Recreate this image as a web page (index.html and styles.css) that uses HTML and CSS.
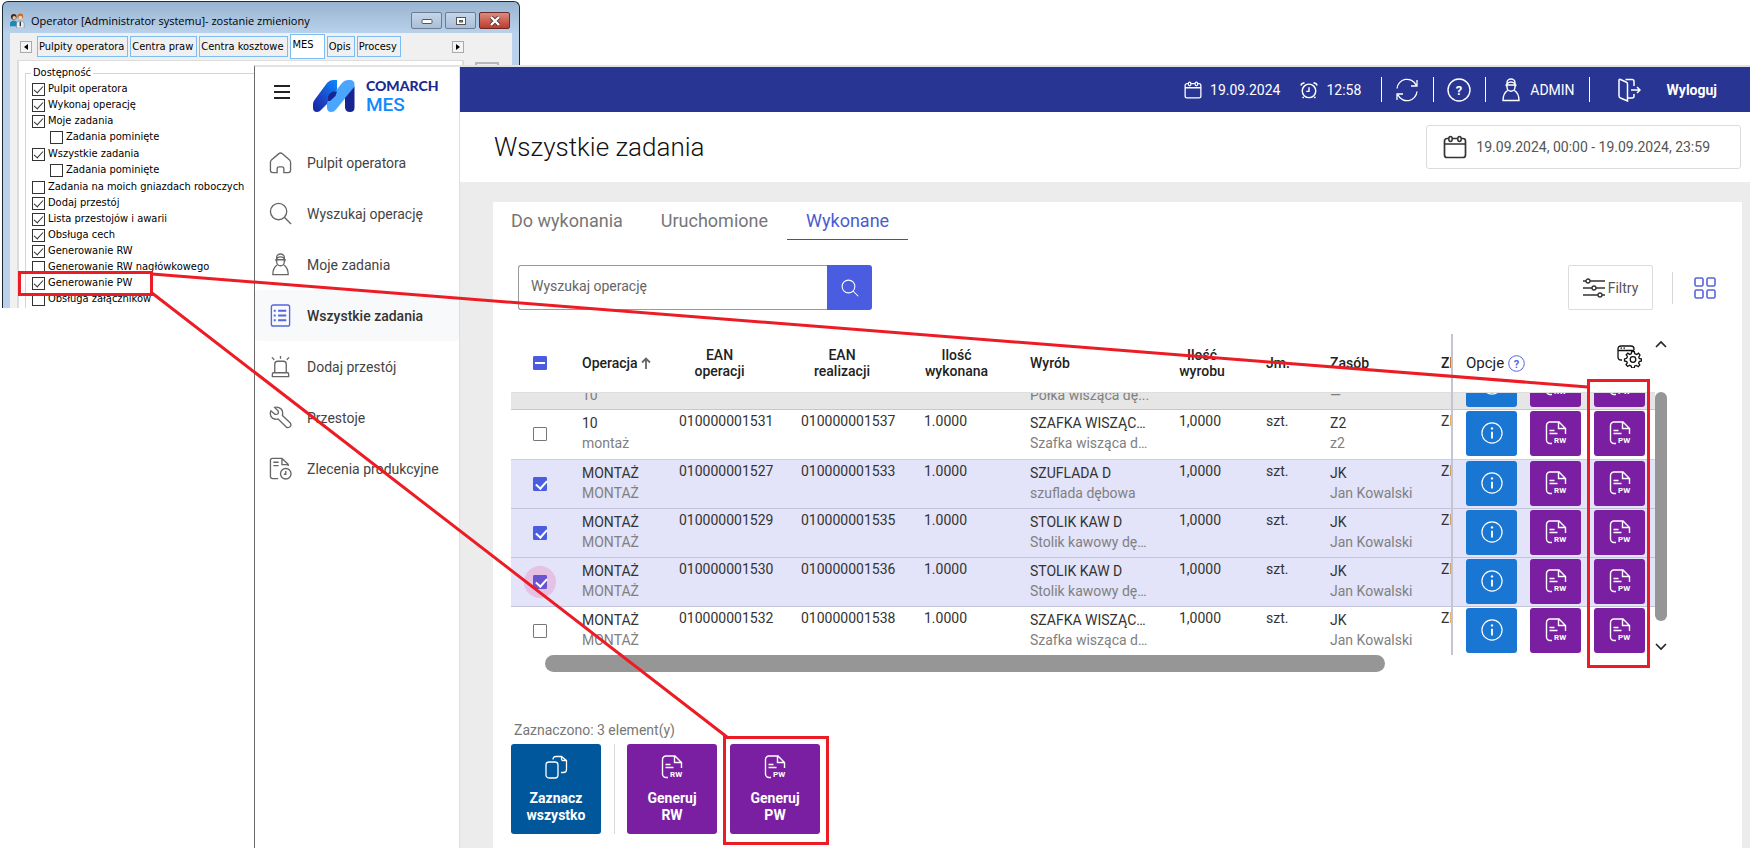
FILE: index.html
```html
<!DOCTYPE html>
<html lang="pl">
<head>
<meta charset="utf-8">
<title>Comarch MES – Wszystkie zadania</title>
<link rel="stylesheet" href="styles.css">
</head>
<body>
<svg class="defs" aria-hidden="true">
  <symbol id="i-doc" viewBox="0 0 22 24"><path d="M7 22.500H5A3.500 3.500 0 0 1 1.500 19V4.500A3.500 3.500 0 0 1 5 1H14L20.500 7.500V13M13.500 1.500V7.500H20M4.500 9.500H9.500M4.500 12.500H12.500" fill="none" stroke="currentColor" stroke-width="1.400"/></symbol>
  <symbol id="i-info" viewBox="0 0 24 24"><circle cx="12" cy="12" r="11" fill="none" stroke="currentColor" stroke-width="1.300"/><path d="M12 10.500V18" stroke="currentColor" stroke-width="2"/><circle cx="12" cy="7" r="1.300" fill="currentColor"/></symbol>
  <symbol id="i-user" viewBox="0 0 18 24"><path d="M4.500 8.500A4.500 4.500 0 0 1 13.500 8.500M3.500 7H14.500M5 7.500V9A4 4.300 0 0 0 13 9V7.500M5.500 12.500C2.500 14.500 1 17.500 1 22.500H17C17 17.500 15.500 14.500 12.500 12.500M5 6V4.500A4 3.500 0 0 1 13 4.500V6" fill="none" stroke="currentColor" stroke-width="1.400"/></symbol>
  <symbol id="i-cal" viewBox="0 0 24 24"><path d="M6 3.500H4A2.500 2.500 0 0 0 1.500 6V20A2.500 2.500 0 0 0 4 22.500H20A2.500 2.500 0 0 0 22.500 20V6A2.500 2.500 0 0 0 20 3.500H18M9 3.500H15M1.500 9H22.500" fill="none" stroke="currentColor" stroke-width="1.700"/><ellipse cx="7.500" cy="4" rx="1.700" ry="2.500" fill="none" stroke="currentColor" stroke-width="1.500"/><ellipse cx="16.500" cy="4" rx="1.700" ry="2.500" fill="none" stroke="currentColor" stroke-width="1.500"/></symbol>
  <symbol id="i-search" viewBox="0 0 24 24"><circle cx="10" cy="10" r="8.500" fill="none" stroke="currentColor" stroke-width="1.400"/><path d="M16 16L23 23" stroke="currentColor" stroke-width="1.400"/></symbol>
</svg>

<section class="win">
  <header class="win-title">
    <svg class="win-icon" viewBox="0 0 16 16"><circle cx="4" cy="4" r="3" fill="#3b2a20"/><circle cx="4.500" cy="5" r="1.800" fill="#f3c79a"/><path d="M0 14V10Q4 6 8 10V14Z" fill="#1b8ab5"/><circle cx="11" cy="3.500" r="3" fill="#d2691e"/><circle cx="11" cy="5" r="2" fill="#f7d3a8"/><path d="M7 16V10.500Q11 6 15 10.500V16Z" fill="#eceff2" stroke="#667" stroke-width=".5"/><path d="M11 9V14" stroke="#333" stroke-width="1.500"/></svg>
    <span class="win-name">Operator [Administrator systemu]- zostanie zmieniony</span>
    <button class="win-btn" aria-label="Minimalizuj"><svg width="12" height="10"><rect x="1" y="3.500" width="10" height="4" rx="1" fill="#fff" stroke="#555"/></svg></button>
    <button class="win-btn" aria-label="Maksymalizuj"><svg width="12" height="10"><rect x="1.500" y="1.500" width="9" height="7" fill="#fff" stroke="#555"/><rect x="4.500" y="4.500" width="3" height="1.500" fill="#8ac" stroke="#555"/></svg></button>
    <button class="win-btn win-close" aria-label="Zamknij"><svg width="12" height="10"><path d="M2 1L10 9M10 1L2 9" stroke="#533" stroke-width="4"/><path d="M2 1L10 9M10 1L2 9" stroke="#fff" stroke-width="2.400"/></svg></button>
  </header>
  <div class="win-body">
    <nav class="win-tabs">
      <button class="arrow" aria-label="W lewo"><svg width="4" height="6"><path d="M4 0V6L0 3Z"/></svg></button>
      <button class="wtab">Pulpity operatora</button>
      <button class="wtab">Centra praw</button>
      <button class="wtab">Centra kosztowe</button>
      <button class="wtab wtab-on">MES</button>
      <button class="wtab">Opis</button>
      <button class="wtab">Procesy</button>
      <button class="arrow arrow-right" aria-label="W prawo"><svg width="4" height="6"><path d="M0 0V6L4 3Z"/></svg></button>
    </nav>
    <div class="win-cols">
      <div class="win-page">
        <fieldset class="group">
          <legend>Dostępność</legend>
          <label class="opt"><input type="checkbox" checked>Pulpit operatora</label>
          <label class="opt"><input type="checkbox" checked>Wykonaj operację</label>
          <label class="opt"><input type="checkbox" checked>Moje zadania</label>
          <label class="opt sub"><input type="checkbox">Zadania pominięte</label>
          <label class="opt"><input type="checkbox" checked>Wszystkie zadania</label>
          <label class="opt sub"><input type="checkbox">Zadania pominięte</label>
          <label class="opt"><input type="checkbox">Zadania na moich gniazdach roboczych</label>
          <label class="opt"><input type="checkbox" checked>Dodaj przestój</label>
          <label class="opt"><input type="checkbox" checked>Lista przestojów i awarii</label>
          <label class="opt"><input type="checkbox" checked>Obsługa cech</label>
          <label class="opt"><input type="checkbox" checked>Generowanie RW</label>
          <label class="opt"><input type="checkbox">Generowanie RW nagłówkowego</label>
          <label class="opt"><input type="checkbox" checked>Generowanie PW</label>
          <label class="opt"><input type="checkbox">Obsługa załączników</label>
        </fieldset>
      </div>
      <button class="save" aria-label="Zapisz"><svg width="14" height="12"><rect width="14" height="12" fill="#5a74b8"/></svg></button>
    </div>
  </div>
</section>

<div class="app">
  <aside class="side">
    <div class="brand">
      <button class="burger" aria-label="Menu"><svg width="16" height="14"><path d="M0 1H16M0 7H16M0 13H16" stroke="#222" stroke-width="2"/></svg></button>
      <svg class="logo" viewBox="0 0 42 32"><defs><linearGradient id="lg" x1="0" y1="1" x2="1" y2="0"><stop offset="0" stop-color="#16249a"/><stop offset=".35" stop-color="#1b3fc0"/><stop offset="1" stop-color="#0a8bff"/></linearGradient></defs><path d="M0 27.500V24Q0 22 1.500 20L14 3Q16.500 0 20 0H24V14L8 30Q6.500 32 4 32Q0 32 0 27.500Z" fill="url(#lg)"/><path d="M14 27.500V24Q14 22 15.500 20L29 3Q31.500 0 35 0H37Q41.500 0 41.500 4.500V7L23 29.500Q21 32 18.500 32Q14 32 14 27.500Z" fill="#4aa5ff"/><path d="M15 21V17Q16 13 20 11.500H24L22.500 16L17 21Z" fill="#18248f"/><path d="M32 27V18L41.500 6.500V27.500Q41.500 32 37 32Q32 32 32 27Z" fill="#18248f"/></svg>
      <div class="brand-text"><b>COMARCH</b><span>MES</span></div>
    </div>
    <nav class="menu">
      <a href="#"><svg viewBox="0 0 24 24"><path d="M10 3L2.500 9.500Q1.500 10.500 1.500 12V20Q1.500 22.500 4 22.500H8.500V18.500Q8.500 16.500 10.500 16.500H13.500Q15.500 16.500 15.500 18.500V22.500H20Q22.500 22.500 22.500 20V12Q22.500 10.500 21.500 9.500L14 3Q12 1 10 3Z"/></svg>Pulpit operatora</a>
      <a href="#"><svg viewBox="0 0 24 24"><use href="#i-search"/></svg>Wyszukaj operację</a>
      <a href="#"><svg viewBox="0 0 24 24"><use href="#i-user" x="3" width="18" height="24"/></svg>Moje zadania</a>
      <a href="#" class="on"><svg viewBox="0 0 24 24"><rect x="2.500" y="1" width="19" height="22" rx="2"/><path d="M9.500 7H18M9.500 12H18M9.500 17H18M5 7H7M5 12H7M5 17H7" stroke-width="2"/></svg>Wszystkie zadania</a>
      <a href="#"><svg viewBox="0 0 24 24"><path d="M6 18V9.500Q6 6.500 9 6.500H15Q18 6.500 18 9.500V18M4.500 18.500H19.500Q20.500 18.500 20.500 20V22.500H3.500V20Q3.500 18.500 4.500 18.500ZM12 1V4M3 2.500L5.500 5M21 2.500L18.500 5"/></svg>Dodaj przestój</a>
      <a href="#"><svg viewBox="0 0 24 24"><path d="M6 1.500L9.500 5Q10.500 8 8.500 8.500Q6 9 5.500 8L2 5Q0 10 4 13Q7 14.500 9.500 13.500L18 22Q20.500 23.500 22.500 21Q23.500 19 22 17.500L14 10Q15 5 12.500 3Q9.500 .5 6 1.500Z"/></svg>Przestoje</a>
      <a href="#"><svg viewBox="0 0 24 24"><path d="M9.500 22.500H4Q1.500 22.500 1.500 20V3.500Q1.500 1.500 3.500 1.500H13.500L20 7.500V9.500M13.500 1.500V8H20M4.500 5.500H10M4.500 9H10"/><circle cx="17.500" cy="17.500" r="5.500"/><path d="M17.500 14.500V18H15.500"/></svg>Zlecenia produkcyjne</a>
    </nav>
  </aside>

  <main class="main">
    <header class="top">
      <span class="stamp"><svg width="18" height="18"><use href="#i-cal"/></svg>19.09.2024</span>
      <span class="stamp"><svg width="18" height="18" viewBox="0 0 20 20" fill="none" stroke="currentColor" stroke-width="1.600"><circle cx="10" cy="11" r="7.500"/><path d="M10 7V11.500H7M1 5Q1.500 2.500 5 2M19 5Q18.500 2.500 15 2M4 17.500L3 19M16 17.500L17 19"/></svg>12:58</span>
      <button class="tool" aria-label="Odśwież"><svg width="24" height="24" viewBox="0 0 24 24" fill="none" stroke="currentColor" stroke-width="1.300"><path d="M2 10.500A10 10 0 0 1 21 7M22 13.500A10 10 0 0 1 3 17M22 2V8H16M2 22V16H8"/></svg></button>
      <button class="tool" aria-label="Pomoc"><svg width="24" height="24" viewBox="0 0 24 24"><circle cx="12" cy="12" r="11" fill="none" stroke="currentColor" stroke-width="1.400"/><text x="12" y="16.500" class="q">?</text></svg></button>
      <button class="tool tool-user"><svg width="18" height="24"><use href="#i-user"/></svg>ADMIN</button>
      <button class="logout"><svg width="24" height="24" viewBox="0 0 24 24" fill="none" stroke="currentColor" stroke-width="1.500"><path d="M8.500 1.500H15Q17 1.500 17 3.500V8M17 16V18Q17 20 15 20H11M2 2Q2 1 3.500 1.500L9 4Q10.500 4.700 10.500 6V23L3.500 20Q2 19.300 2 18ZM14 12H23M20 9L23 12L20 15"/></svg>Wyloguj</button>
    </header>
    <div class="head">
      <h1>Wszystkie zadania</h1>
      <button class="range"><svg width="24" height="24"><use href="#i-cal"/></svg>19.09.2024, 00:00 - 19.09.2024, 23:59</button>
    </div>
    <div class="content">
      <section class="panel">
        <nav class="tabs">
          <button>Do wykonania</button>
          <button>Uruchomione</button>
          <button class="on">Wykonane</button>
        </nav>
        <div class="bar">
          <form class="search">
            <input type="text" placeholder="Wyszukaj operację" aria-label="Wyszukaj operację">
            <button type="button" aria-label="Szukaj"><svg width="18" height="18"><use href="#i-search"/></svg></button>
          </form>
          <button class="filter"><svg width="22" height="20" viewBox="0 0 22 20" fill="#fff" stroke="#333" stroke-width="1.300"><path d="M0 3H22M0 10H22M0 17H22"/><circle cx="5" cy="3" r="2"/><circle cx="11" cy="10" r="2"/><circle cx="17" cy="17" r="2"/></svg>Filtry</button>
          <button class="view" aria-label="Widok kafelków"><svg width="22" height="22" fill="none" stroke="#5564e0" stroke-width="1.600"><rect x="1" y="1" width="8" height="8" rx="1.500"/><rect x="13" y="1" width="8" height="8" rx="1.500"/><rect x="1" y="13" width="8" height="8" rx="1.500"/><rect x="13" y="13" width="8" height="8" rx="1.500"/></svg></button>
        </div>

        <div class="grid">
          <table>
            <colgroup><col class="c-check"><col class="c-op"><col class="c-ean"><col class="c-ean2"><col class="c-qty"><col class="c-prod"><col class="c-num"><col class="c-unit"><col class="c-res"><col><col class="c-act"></colgroup>
            <thead>
              <tr>
                <th class="tc"><input type="checkbox" class="box part" aria-label="Zaznacz wszystkie"></th>
                <th>Operacja <svg width="10" height="12" viewBox="0 0 10 12" fill="none" stroke="#666" stroke-width="1.800"><path d="M5 12V2M1 5.500L5 1.500L9 5.500"/></svg></th>
                <th class="two">EAN<br>operacji</th>
                <th class="two">EAN<br>realizacji</th>
                <th class="two">Ilość<br>wykonana</th>
                <th>Wyrób</th>
                <th class="two">Ilość<br>wyrobu</th>
                <th>Jm.</th>
                <th>Zasób</th>
                <th class="cut">Zl</th>
                <th class="acts"><div class="opc"><span>Opcje</span><svg class="hint" width="17" height="17" viewBox="0 0 17 17"><circle cx="8.500" cy="8.500" r="7.800" fill="none" stroke="#5564e0"/><text x="8.500" y="12.500">?</text></svg><svg class="gear" width="25" height="23" viewBox="0 0 25 23" fill="none" stroke="#111" stroke-width="1.300"><path d="M5 15H4Q1 15 1 12V4Q1 1 4 1H14Q17 1 17 4V5M1 5.500H17M3.500 3.200H5M6.500 3.200H8"/><circle cx="16" cy="14.500" r="2.800"/><path d="M14.700 6.500H17.300L17.800 8.700L19.700 9.500L21.500 8.200L23 10L21.800 12L22.300 13.500L24.500 14V16L22.300 16.500L21.600 18.200L22.800 20L21.200 21.700L19.300 20.400L17.700 21L17.300 22.800H14.700L14.200 21L12.500 20.300L10.700 21.500L9 19.800L10.300 18L9.700 16.500L7.500 16V14L9.700 13.300L10.400 11.500L9.200 9.800L10.800 8.200L12.700 9.400L14.200 8.800Z"/></svg></div></th>
              </tr>
            </thead>
            <tbody>
              <tr class="clip">
                <td></td>
                <td><div class="slice">10</div></td>
                <td></td><td></td><td></td>
                <td><div class="slice">Półka wisząca dę...</div></td>
                <td></td><td></td>
                <td><div class="slice">—</div></td>
                <td></td>
                <td class="acts"><div class="slice btns"><button class="b-info" aria-label="Informacje"><svg><use href="#i-info"/></svg></button><button aria-label="Generuj RW"><svg><use href="#i-doc"/><text x="9" y="22">RW</text></svg></button><button aria-label="Generuj PW"><svg><use href="#i-doc"/><text x="9" y="22">PW</text></svg></button></div></td>
              </tr>
              <tr class="first">
                <td class="tc"><input type="checkbox" class="box" aria-label="Zaznacz 010000001531"></td>
                <td class="duo">10<small>montaż</small></td>
                <td>010000001531</td><td>010000001537</td><td>1.0000</td>
                <td class="duo"><span>SZAFKA WISZĄCA D</span><small>Szafka wisząca dębowa</small></td>
                <td>1,0000</td><td>szt.</td>
                <td class="duo">Z2<small>z2</small></td>
                <td class="cut">ZP</td>
                <td class="acts"><div class="btns"><button class="b-info" aria-label="Informacje"><svg><use href="#i-info"/></svg></button><button aria-label="Generuj RW"><svg><use href="#i-doc"/><text x="9" y="22">RW</text></svg></button><button aria-label="Generuj PW"><svg><use href="#i-doc"/><text x="9" y="22">PW</text></svg></button></div></td>
              </tr>
              <tr class="sel">
                <td class="tc"><input type="checkbox" class="box" checked aria-label="Zaznacz 010000001527"></td>
                <td class="duo">MONTAŻ<small>MONTAŻ</small></td>
                <td>010000001527</td><td>010000001533</td><td>1.0000</td>
                <td class="duo"><span>SZUFLADA D</span><small>szuflada dębowa</small></td>
                <td>1,0000</td><td>szt.</td>
                <td class="duo">JK<small>Jan Kowalski</small></td>
                <td class="cut">ZP</td>
                <td class="acts"><div class="btns"><button class="b-info" aria-label="Informacje"><svg><use href="#i-info"/></svg></button><button aria-label="Generuj RW"><svg><use href="#i-doc"/><text x="9" y="22">RW</text></svg></button><button aria-label="Generuj PW"><svg><use href="#i-doc"/><text x="9" y="22">PW</text></svg></button></div></td>
              </tr>
              <tr class="sel">
                <td class="tc"><input type="checkbox" class="box" checked aria-label="Zaznacz 010000001529"></td>
                <td class="duo">MONTAŻ<small>MONTAŻ</small></td>
                <td>010000001529</td><td>010000001535</td><td>1.0000</td>
                <td class="duo"><span>STOLIK KAW D</span><small>Stolik kawowy dębowy</small></td>
                <td>1,0000</td><td>szt.</td>
                <td class="duo">JK<small>Jan Kowalski</small></td>
                <td class="cut">ZP</td>
                <td class="acts"><div class="btns"><button class="b-info" aria-label="Informacje"><svg><use href="#i-info"/></svg></button><button aria-label="Generuj RW"><svg><use href="#i-doc"/><text x="9" y="22">RW</text></svg></button><button aria-label="Generuj PW"><svg><use href="#i-doc"/><text x="9" y="22">PW</text></svg></button></div></td>
              </tr>
              <tr class="sel">
                <td class="tc"><input type="checkbox" class="box ripple" checked aria-label="Zaznacz 010000001530"></td>
                <td class="duo">MONTAŻ<small>MONTAŻ</small></td>
                <td>010000001530</td><td>010000001536</td><td>1.0000</td>
                <td class="duo"><span>STOLIK KAW D</span><small>Stolik kawowy dębowy</small></td>
                <td>1,0000</td><td>szt.</td>
                <td class="duo">JK<small>Jan Kowalski</small></td>
                <td class="cut">ZP</td>
                <td class="acts"><div class="btns"><button class="b-info" aria-label="Informacje"><svg><use href="#i-info"/></svg></button><button aria-label="Generuj RW"><svg><use href="#i-doc"/><text x="9" y="22">RW</text></svg></button><button aria-label="Generuj PW"><svg><use href="#i-doc"/><text x="9" y="22">PW</text></svg></button></div></td>
              </tr>
              <tr>
                <td class="tc"><input type="checkbox" class="box" aria-label="Zaznacz 010000001532"></td>
                <td class="duo">MONTAŻ<small>MONTAŻ</small></td>
                <td>010000001532</td><td>010000001538</td><td>1.0000</td>
                <td class="duo"><span>SZAFKA WISZĄCA D</span><small>Szafka wisząca dębowa</small></td>
                <td>1,0000</td><td>szt.</td>
                <td class="duo">JK<small>Jan Kowalski</small></td>
                <td class="cut">ZP</td>
                <td class="acts"><div class="btns"><button class="b-info" aria-label="Informacje"><svg><use href="#i-info"/></svg></button><button aria-label="Generuj RW"><svg><use href="#i-doc"/><text x="9" y="22">RW</text></svg></button><button aria-label="Generuj PW"><svg><use href="#i-doc"/><text x="9" y="22">PW</text></svg></button></div></td>
              </tr>
            </tbody>
          </table>
          <div class="vscroll">
            <svg width="12" height="8" fill="none" stroke="#222" stroke-width="1.600"><path d="M1 7L6 2L11 7"/></svg>
            <div class="vthumb"></div>
            <svg width="12" height="8" fill="none" stroke="#222" stroke-width="1.600"><path d="M1 1L6 6L11 1"/></svg>
          </div>
        </div>
        <div class="hscroll"><div class="hthumb"></div></div>

        <footer class="foot">
          <p>Zaznaczono: 3 element(y)</p>
          <div class="tiles">
            <button class="tile tile-blue"><svg width="24" height="24" viewBox="0 0 24 24" fill="none" stroke="currentColor" stroke-width="1.300"><rect x="2" y="7" width="12" height="16" rx="3"/><path d="M9 4.500Q9 1.500 12 1.500H17.500L22.500 5.500V14.500Q22.500 17.500 19.500 17.500H17M17.500 1.500V4Q17.500 5.500 19 5.500H22.500"/></svg>Zaznacz wszystko</button>
            <span class="rule"></span>
            <button class="tile"><svg width="22" height="24"><use href="#i-doc"/><text x="9" y="22">RW</text></svg>Generuj<br>RW</button>
            <button class="tile"><svg width="22" height="24"><use href="#i-doc"/><text x="9" y="22">PW</text></svg>Generuj<br>PW</button>
          </div>
        </footer>
      </section>
    </div>
  </main>
</div>

<svg class="marks" width="1750" height="848" viewBox="0 0 1750 848" aria-hidden="true">
  <g fill="none" stroke="#ed1c24" stroke-width="3">
    <rect x="19.500" y="272.500" width="132" height="22"/>
    <rect x="1588.500" y="380.500" width="60" height="286"/>
    <rect x="724.500" y="737.500" width="103" height="106"/>
    <path d="M152 274L1588 387M152 293L727 737"/>
  </g>
</svg>
</body>
</html>
```

FILE: styles.css
```css
* { box-sizing: border-box; }

body {
  margin: 0;
  background: #fff;
  font-family: Roboto, "Liberation Sans", sans-serif;
  font-size: 14px;
  color: #333;
  position: relative;
}

button {
  font: inherit;
  color: inherit;
  background: none;
  border: 0;
  padding: 0;
  margin: 0;
}

svg { display: block; flex: none; }
.defs { position: absolute; width: 0; height: 0; }

/* desktop window behind the application */
.win {
  position: absolute;
  left: 2px;
  top: 1px;
  width: 518px;
  height: 307px;
  overflow: hidden;
  display: flex;
  flex-direction: column;
  border: 1px solid #1b2a33;
  border-bottom: 0;
  border-radius: 6px 6px 0 0;
  background: linear-gradient(#99b4d1, #b9d1ea 31px);
  padding: 0 7px;
  font: 11px "DejaVu Sans Condensed", "DejaVu Sans", sans-serif;
  color: #000;
}
.win-title {
  display: flex;
  flex: none;
  align-items: center;
  height: 31px;
  padding-top: 6px;
}
.win-icon { width: 15px; height: 15px; margin-right: 6px; }
.win-name { flex: 1; font: 11px/16px "Open Sans", "Noto Sans", sans-serif; white-space: nowrap; }
.win-btn {
  display: flex;
  align-items: center;
  justify-content: center;
  width: 31px;
  height: 17px;
  margin-right: 3px;
  border: 1px solid #6b7d92;
  border-radius: 2px;
  background: linear-gradient(#c5d5e8, #a9bfd8);
}
.win-close { margin-right: 2px; border-color: #6b2a2a; background: linear-gradient(#d98c80, #c03a2b); }
.win-body { flex: 1; min-height: 0; background: #f0f0f0; }
.win-tabs { display: flex; align-items: center; height: 27px; padding-left: 10px; }
.arrow {
  display: flex;
  align-items: center;
  justify-content: center;
  width: 12px;
  height: 12px;
  margin-right: 5px;
  border: 1px solid #aaa;
  background: #f4f4f4;
}
.arrow-right { margin-left: auto; margin-right: 48px; }
.wtab {
  height: 21px;
  margin-right: 2px;
  padding: 0 3px 0 1px;
  border: 1px solid #7cbcf5;
  white-space: nowrap;
}
.wtab-on { height: 25px; padding: 0 10px 4px 2px; background: #fff; }
.win-cols { display: flex; align-items: flex-start; }
.win-page {
  width: 447px;
  margin-left: 7px;
  padding: 4px 0 0 6px;
  background: #fff;
  border: 2px solid #dcdcdc;
  border-width: 1px 2px 0;
}
.group { margin: 0; padding: 0 0 40px 6px; border: 1px solid #d4d4d4; }
.group legend { padding: 0 2px; margin-left: -1px; line-height: 16px; }
.opt { display: flex; align-items: center; gap: 3px; height: 16px; line-height: 16px; white-space: nowrap; }
.sub { margin: 0 0 1px 18px; }
.opt input {
  appearance: none;
  position: relative;
  width: 13px;
  height: 13px;
  margin: 0;
  border: 1px solid #333;
  background: #fff;
}
.opt input:checked::after {
  content: "";
  position: absolute;
  left: 3px;
  top: 0;
  width: 4px;
  height: 8px;
  border: solid #333;
  border-width: 0 1px 1px 0;
  transform: rotate(42deg);
}
.save { margin: 2px 0 0 11px; width: 24px; height: 18px; border: 2px solid #b4b8bc; padding: 2px; }

/* application */
.app {
  position: relative;
  display: flex;
  margin: 65px 0 0 254px;
  min-height: calc(100vh - 65px);
  background: #fff;
  border-left: 1px solid #6c6c6c;
  border-top: 2px solid #e2e4e2;
}
.side { width: 205px; flex: none; border-right: 1px solid #dedede; }
.brand { display: flex; align-items: flex-start; padding: 13px 0 0 19px; height: 70px; }
.burger { margin: 5px 23px 0 0; }
.logo { width: 42px; height: 32px; }
.brand-text { display: flex; flex-direction: column; margin-left: 11px; }
.brand-text b { font: 900 14px/12px Lato, sans-serif; color: #1a2a8f; }
.brand-text span { font: 500 19px/24px Roboto, sans-serif; color: #118aff; margin-top: 1px; }

.menu a {
  display: flex;
  align-items: center;
  gap: 15px;
  height: 51px;
  padding-left: 14px;
  color: #444;
  text-decoration: none;
  white-space: nowrap;
}
.menu svg { width: 23px; height: 23px; fill: none; stroke: currentColor; stroke-width: 1.400; color: #666; }
.menu .on { background: #f8f9fb; border-radius: 4px; font-weight: 500; color: #333; }
.menu .on svg { color: #5564e0; }

.main { flex: 1; min-width: 0; display: flex; flex-direction: column; }
.top {
  display: flex;
  align-items: center;
  justify-content: flex-end;
  height: 45px;
  padding-right: 33px;
  background: #283593;
  color: #fff;
}
.stamp { display: flex; align-items: center; gap: 8px; margin-right: 20px; }
.tool { display: flex; align-items: center; height: 25px; padding: 0 14px 0 13px; border-left: 1px solid #fff; gap: 10px; }
.tool-user { border-right: 1px solid #fff; padding-left: 16px; }
.q { font: 700 13px Roboto, sans-serif; fill: currentColor; text-anchor: middle; }
.logout { display: flex; align-items: center; gap: 26px; margin-left: 27px; font-weight: 700; }

.head { display: flex; align-items: center; justify-content: space-between; height: 70px; padding: 0 9px 1px 34px; }
h1 { margin: 0; font-size: 26px; line-height: 30px; font-weight: 300; color: #111; }
.range {
  display: flex;
  align-items: center;
  gap: 9px;
  height: 44px;
  padding: 0 30px 0 16px;
  border: 1px solid #dcdcdc;
  border-radius: 3px;
  color: #555;
}
.range svg { color: #333; }

.content { flex: 1; background: #ececec; padding: 20px 8px 0 33px; }
.panel { min-height: 100%; background: #fff; padding: 0 0 14px 18px; }

.tabs { display: flex; height: 38px; }
.tabs button { height: 38px; padding: 0 19px; font-size: 18px; color: #777; border-bottom: 1px solid transparent; white-space: nowrap; }
.tabs button:first-child { padding-left: 0; }
.tabs .on { color: #4a5bd0; border-color: #3f51b5; }

.bar { display: flex; align-items: center; padding: 25px 26px 24px 7px; }
.search { display: flex; width: 354px; margin-right: auto; }
.search input {
  flex: 1;
  min-width: 0;
  height: 45px;
  padding: 0 12px 3px;
  border: 1px solid #999;
  border-right: 0;
  border-radius: 3px 0 0 3px;
  font: 14px Roboto, sans-serif;
  color: #333;
  background: #fff;
}
.search input::placeholder { color: #666; }
.search button {
  display: flex;
  align-items: center;
  justify-content: center;
  width: 45px;
  border-radius: 0 3px 3px 0;
  background: #4a5ce0;
  color: #fff;
}
.filter {
  display: flex;
  align-items: center;
  justify-content: center;
  gap: 3px;
  width: 85px;
  height: 45px;
  border: 1px solid #dcdcdc;
  border-radius: 2px;
  color: #555;
}
.view { height: 32px; margin-left: 19px; padding-left: 21px; border-left: 1px solid #d8d8d8; }

/* task table */
.grid { display: flex; padding-right: 75px; }
table { flex: 1; width: 100%; table-layout: fixed; border-collapse: collapse; }
.c-check { width: 57px; }
.c-op { width: 97px; }
.c-ean { width: 122px; }
.c-ean2 { width: 123px; }
.c-qty { width: 106px; }
.c-prod { width: 149px; }
.c-num { width: 87px; }
.c-unit { width: 64px; }
.c-res { width: 111px; }
.c-act { width: 203px; }
th {
  height: 58px;
  padding: 0 0 0 14px;
  border-bottom: 1px solid #dedede;
  text-align: left;
  font-weight: 500;
  line-height: 16px;
  color: #222;
  white-space: nowrap;
}
th svg { display: inline-block; vertical-align: -1px; }
.two { padding-right: 27px; text-align: center; }
td {
  height: 49px;
  padding: 1px 0 0 14px;
  border-bottom: 1px solid #cfcfd8;
  vertical-align: top;
  line-height: 20px;
  white-space: nowrap;
  color: #333;
}
.first td { height: 50px; }
tbody tr:last-child td { border-bottom: 0; }
.duo { padding: 3px 14px 0; overflow: hidden; }
.duo span, .duo small { display: block; overflow: hidden; text-overflow: ellipsis; }
.duo small { font-size: 14px; color: #808080; }
.cut { overflow: hidden; }
.tc { padding: 0; text-align: center; vertical-align: middle; line-height: 0; }
.sel td { background: #e3e3f9; border-bottom-color: #c3c3da; }
.clip td { height: 17px; padding: 0 0 0 14px; background: #e6e6e6; border-color: #c8c8c8; }
.slice { display: flex; align-items: flex-end; height: 16px; padding-bottom: 4px; overflow: hidden; color: #808080; }
.clip .btns { padding-bottom: 2px; }
.acts, .clip .acts { padding: 1px 0 0 13px; border-left: 2px solid #c4c4d2; }
.clip .acts { padding-top: 0; }
.btns { display: flex; gap: 13px; }
.btns button {
  display: flex;
  align-items: center;
  justify-content: center;
  flex: none;
  width: 51px;
  height: 45px;
  border-radius: 3px;
  background: #7b1fa2;
  color: #fff;
}
.btns .b-info { background: #1976d2; }
.btns svg { width: 22px; height: 24px; overflow: visible; }
.btns svg text, .tile text { font: 700 8px Roboto, sans-serif; fill: #fff; }
.opc { display: flex; align-items: center; gap: 4px; padding-right: 13px; font-size: 15px; font-weight: 400; }
.hint text { font: 700 11px Roboto, sans-serif; fill: #5564e0; text-anchor: middle; }
.opc .gear { margin: 0 0 14px auto; }

.box {
  appearance: none;
  position: relative;
  width: 14px;
  height: 14px;
  margin: 0;
  border: 1px solid #777;
  border-radius: 1px;
  background: #fff;
}
.box:checked, .part { border-color: #4a5ce0; background: #4a5ce0; }
.box:checked::after {
  content: "";
  position: absolute;
  left: 4px;
  top: 0;
  width: 5px;
  height: 9px;
  border: solid #fff;
  border-width: 0 2px 2px 0;
  transform: rotate(42deg);
}
.part::after { content: ""; position: absolute; left: 1px; top: 5px; width: 10px; height: 2px; background: #fff; }
.ripple::before {
  content: "";
  position: absolute;
  left: -10px;
  top: -10px;
  width: 32px;
  height: 32px;
  border-radius: 50%;
  background: rgba(233, 60, 150, .2);
}

.vscroll { display: flex; flex-direction: column; align-items: center; width: 12px; padding: 6px 0 4px; }
.vthumb { width: 12px; height: 229px; margin: 44px 0 auto; border-radius: 6px; background: #969696; }
.hscroll { padding: 0 77px 0 34px; }
.hthumb { width: 75%; height: 17px; border-radius: 9px; background: #969696; }

.foot p { margin: 48px 0 4px 3px; line-height: 20px; color: #777; }
.tiles { display: flex; }
.tile {
  display: flex;
  flex-direction: column;
  align-items: center;
  width: 90px;
  height: 90px;
  margin-right: 13px;
  padding: 11px 8px 0;
  border-radius: 3px;
  background: #7b1fa2;
  color: #fff;
  font-weight: 700;
  line-height: 17px;
  text-align: center;
}
.tile svg { margin-bottom: 11px; overflow: visible; }
.tile-blue { background: #01579b; }
.rule { width: 1px; margin-right: 12px; background: #d8d8d8; }

/* red call-outs drawn over both windows */
.marks { position: absolute; left: 0; top: 0; pointer-events: none; }
```
